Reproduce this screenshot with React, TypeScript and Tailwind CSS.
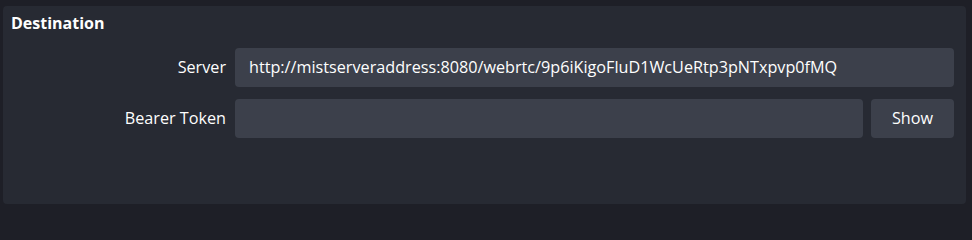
export default function App() {
  return (
    <div
      className="min-h-screen w-[972px] bg-[#1e1f27] pt-[6px] pl-[3px] pr-[6px] pb-[7px]"
      style={{ fontFamily: '"Open Sans", "Noto Sans", sans-serif' }}
    >
      <div className="h-[198px] w-[963px] rounded-[4px] bg-[#272a33] pl-[8px] pr-[12px] pt-[6px] text-[#fefefe]">
        <div className="text-[16px] font-bold leading-[22px]">Destination</div>
        <div className="mt-[14px] grid grid-cols-[215px_1fr] gap-x-[9px] gap-y-[12px] text-[16.2px]">
          <div className="flex h-[39px] items-center justify-end">Server</div>
          <div className="flex h-[39px] items-center rounded-[4px] bg-[#3c404b] px-[14px]">
            http://mistserveraddress:8080/webrtc/9p6iKigoFluD1WcUeRtp3pNTxpvp0fMQ
          </div>
          <div className="flex h-[39px] items-center justify-end">Bearer Token</div>
          <div className="flex gap-[8px]">
            <div className="h-[39px] flex-1 rounded-[4px] bg-[#3c404b]" />
            <div className="flex h-[39px] w-[83px] items-center justify-center rounded-[4px] bg-[#3c404b]">
              Show
            </div>
          </div>
        </div>
      </div>
    </div>
  );
}
